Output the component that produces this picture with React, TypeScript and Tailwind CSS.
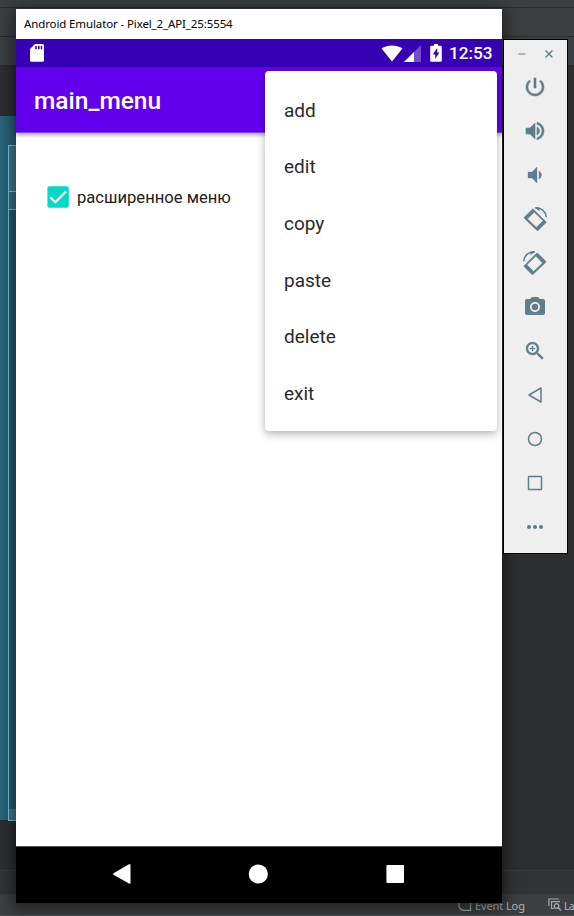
import React from "react";

const menuItems = ["add", "edit", "copy", "paste", "delete", "exit"];

const POWER =
  "M13 3h-2v10h2V3zm4.83 2.17l-1.42 1.42C17.99 7.86 19 9.81 19 12c0 3.87-3.13 7-7 7s-7-3.13-7-7c0-2.19 1.01-4.14 2.58-5.42L6.17 5.17C4.23 6.82 3 9.26 3 12c0 4.97 4.03 9 9 9s9-4.03 9-9c0-2.74-1.23-5.18-3.17-6.83z";
const VOL_UP =
  "M3 9v6h4l5 5V4L7 9H3zm13.5 3c0-1.77-1.02-3.29-2.5-4.03v8.05c1.48-.73 2.5-2.25 2.5-4.02zM14 3.23v2.06c2.89.86 5 3.54 5 6.71s-2.11 5.85-5 6.71v2.06c4.01-.91 7-4.49 7-8.77s-2.99-7.86-7-8.77z";
const VOL_DOWN =
  "M18.5 12c0-1.77-1.02-3.29-2.5-4.03v8.05c1.48-.73 2.5-2.25 2.5-4.02zM5 9v6h4l5 5V4L9 9H5z";
const CAMERA =
  "M12 8.8a3.2 3.2 0 1 0 0 6.4 3.2 3.2 0 1 0 0-6.4zM9 2L7.17 4H4c-1.1 0-2 .9-2 2v12c0 1.1.9 2 2 2h16c1.1 0 2-.9 2-2V6c0-1.1-.9-2-2-2h-3.17L15 2H9zm3 15c-2.76 0-5-2.24-5-5s2.24-5 5-5 5 2.24 5 5-2.24 5-5 5z";
const ZOOM =
  "M15.5 14h-.79l-.28-.27C15.41 12.59 16 11.11 16 9.5 16 5.91 13.09 3 9.5 3S3 5.91 3 9.5 5.91 16 9.5 16c1.61 0 3.09-.59 4.23-1.57l.27.28v.79l5 4.99L20.49 19l-4.99-5zm-6 0C7.01 14 5 11.99 5 9.5S7.01 5 9.5 5 14 7.01 14 9.5 11.99 14 9.5 14zM12 10h-2v2H9v-2H7V9h2V7h1v2h2v1z";

function ToolIcon({ children }: { children: React.ReactNode }) {
  return (
    <div className="flex h-11 items-center justify-center pr-px">
      <svg viewBox="0 0 24 24" className="size-6 shrink-0 fill-[#607d8b]">
        {children}
      </svg>
    </div>
  );
}

function RotateShape() {
  return (
    <g>
      <path
        fillRule="evenodd"
        stroke="#607d8b"
        strokeWidth=".7"
        d="M9.2 2.4L1.5 10Q.9 10.7 1.5 11.4L13.8 23.2Q14.5 23.8 15.2 23.2L22.6 15.9Q23.2 15.2 22.6 14.5L10.6 2.4Q9.9 1.8 9.2 2.4zM11.2 5L4.4 11.9 13.3 20.5 20.2 13.8z"
      />
      <path d="M12.2 .8C18 .3 22.8 4.2 23.3 10.3" fill="none" stroke="#607d8b" strokeWidth="1.5" />
      <path d="M11.8 .9L15.8 .3 17 4.2z" />
    </g>
  );
}

function Toolbar() {
  return (
    <aside className="absolute left-[503px] top-[39px] flex h-[515px] w-[65px] flex-col border border-black bg-[#efefef]">
      <div className="flex h-[25px] items-center justify-center gap-[17px] pt-[3px]">
        <svg viewBox="0 0 10 10" className="size-[10px]">
          <path d="M1.5 5h7" stroke="#94a7b0" strokeWidth="1.6" />
        </svg>
        <svg viewBox="0 0 10 10" className="size-[10px]">
          <path d="M1.5 1.5l7 7M8.5 1.5l-7 7" stroke="#607d8b" strokeWidth="1.4" />
        </svg>
      </div>
      <ToolIcon><path d={POWER} stroke="#607d8b" strokeWidth=".6" /></ToolIcon>
      <ToolIcon><path d={VOL_UP} stroke="#607d8b" strokeWidth=".6" /></ToolIcon>
      <ToolIcon><path d={VOL_DOWN} stroke="#607d8b" strokeWidth=".3" /></ToolIcon>
      <ToolIcon><RotateShape /></ToolIcon>
      <ToolIcon><g transform="translate(24 0) scale(-1 1)"><RotateShape /></g></ToolIcon>
      <ToolIcon><path d={CAMERA} /></ToolIcon>
      <ToolIcon><path d={ZOOM} stroke="#607d8b" strokeWidth=".3" /></ToolIcon>
      <ToolIcon><path d="M18 5v14L6 12z" fill="none" stroke="#607d8b" strokeWidth="1.5" strokeLinejoin="round" /></ToolIcon>
      <ToolIcon><circle cx="12" cy="12" r="6.5" fill="none" stroke="#607d8b" strokeWidth="1.5" /></ToolIcon>
      <ToolIcon><rect x="5.5" y="5.5" width="13" height="13" rx=".6" fill="none" stroke="#607d8b" strokeWidth="1.5" /></ToolIcon>
      <ToolIcon>
        <circle cx="6" cy="12" r="2" />
        <circle cx="12" cy="12" r="2" />
        <circle cx="18" cy="12" r="2" />
      </ToolIcon>
    </aside>
  );
}

function StatusBar() {
  return (
    <div className="flex h-7 shrink-0 items-center bg-[#3700b3] pl-[14px] pr-[10px] text-white">
      <svg viewBox="0 0 14 18" className="h-[18px] w-[14px]">
        <path fill="#fff" d="M5 0h7.5Q14 0 14 1.5v14.8q0 1.5-1.5 1.5h-11Q0 17.8 0 16.3V5z" />
        <path fill="#3700b3" d="M5.2 2h1.6v3.2H5.2zM8 2h1.6v3.2H8zM10.7 2h1.5v3.2h-1.5z" />
      </svg>
      <svg viewBox="0 0 22 17" className="ml-auto h-[17px] w-[22px]">
        <path fill="#fff" d="M.6 3.6C6.5-.7 15.5-.7 21.4 3.6L11 16.6z" />
      </svg>
      <svg viewBox="0 0 17 17" className="ml-[1px] h-[17px] w-[17px]">
        <path fill="#fff" fillOpacity=".3" d="M17 0v17H0z" />
        <path fill="#fff" d="M10 7V17H0z" />
      </svg>
      <svg viewBox="0 0 12 18" className="ml-[9px] h-[18px] w-3">
        <path fill="#fff" d="M4 0h4v1.8h2.7q1.1 0 1.1 1.1v13.8q0 1.1-1.1 1.1H1.3Q.2 17.8.2 16.7V2.9q0-1.1 1.1-1.1H4z" />
        <path fill="#3700b3" d="M7.2 4L2.8 10.5h2.5V15l4-6.4H7.2z" />
      </svg>
      <span className="ml-[7px] w-[43px] whitespace-nowrap text-[17.2px] font-medium leading-7">12:53</span>
    </div>
  );
}

function Emulator() {
  return (
    <section className="absolute left-4 top-[9px] flex h-[894px] w-[486px] flex-col bg-white shadow-[0_3px_14px_3px_rgba(0,0,0,0.5)]">
      <header className="h-[30px] shrink-0 pl-2 font-['Noto_Sans','Open_Sans',sans-serif] text-[11.5px] leading-[30px] text-black">
        <span className="whitespace-nowrap tracking-[-0.12px]">Android Emulator - Pixel_2_API_25:5554</span>
      </header>
      <StatusBar />
      <div className="flex h-[66px] shrink-0 items-center border-b border-[#8142ee] bg-[#6200ee] pl-[18px] pt-[4px] text-[24.5px] font-medium text-white shadow-[0_2px_4px_rgba(0,0,0,0.35)]">
        main_menu
      </div>
      <main className="flex flex-1 items-start pl-[31px] pt-[53px]">
        <svg viewBox="0 0 22 22" className="size-[22px] shrink-0">
          <rect x=".4" y=".2" width="21.4" height="21.6" rx="2" fill="#03dac5" />
          <path d="M3.3 11.2l5 5L19 5.5" fill="none" stroke="#fff" strokeWidth="2.3" />
        </svg>
        <span className="ml-[8px] whitespace-nowrap text-[16.6px] leading-[24px] text-[#202020]">расширенное меню</span>
      </main>
      <nav className="flex h-[57px] shrink-0 items-center border-t border-[#555] bg-black pb-[2px] pl-[97px]">
        <svg viewBox="0 0 18 20" className="h-5 w-[18px]">
          <path fill="#fff" d="M17.5 .3v19.4L16 19.5.5 10.8Q-.2 10 .5 9.2L16 .3z" />
        </svg>
        <svg viewBox="0 0 20 20" className="ml-[117px] size-5">
          <circle cx="10.3" cy="10" r="9.6" fill="#fff" />
        </svg>
        <svg viewBox="0 0 18 18" className="ml-[118px] size-[18px]">
          <rect x=".4" width="17.6" height="18" rx="1" fill="#fff" />
        </svg>
      </nav>
      <ul className="absolute left-[249px] top-[62px] flex h-[360px] w-[232px] flex-col rounded-[4px] bg-white pt-[11.6px] shadow-[0_3px_9px_rgba(0,0,0,0.3)]">
        {menuItems.map((item) => (
          <li key={item} className="flex h-[56.7px] items-center pl-[19px] text-[19px] text-[#2a2a2a]">
            {item}
          </li>
        ))}
      </ul>
    </section>
  );
}

function IdeBackdrop() {
  return (
    <div className="flex h-[916px] w-[574px] flex-col bg-[#2d2e30]">
      <div className="h-2 shrink-0 border-b border-[#2b2b2b] bg-[#3c3f41]" />
      <div className="h-[29px] shrink-0 border-b border-[#2b2b2b] bg-[#3c3f41]" />
      <div className="h-[29px] shrink-0 border-b border-[#2b2b2b] bg-[#3c3f41]" />
      <div className="h-[50px] shrink-0" />
      <div className="h-[704px] w-16 shrink-0 bg-[#28647a] pl-2 pt-[29px]">
        <div className="h-[676px] border border-r-0 border-[#7cc6dc] bg-[#225d70]">
          <div className="h-[46px] border-b border-[#7cc6dc] bg-[#417a8c]" />
          <div className="h-[18px] border-b border-[#7cc6dc] bg-[#357084]" />
          <div className="h-[599px]" />
          <div className="h-[11px] bg-[#417a8c]" />
        </div>
      </div>
      <div className="h-[50px] shrink-0" />
      <div className="h-6 shrink-0 border-t border-[#3a3c3e] bg-[#313335]" />
      <div className="flex h-[22px] shrink-0 items-center overflow-hidden border-b border-[#4b4e50] bg-[#3c3f41] pl-[458px] font-['Noto_Sans','Open_Sans',sans-serif] text-[11px] text-[#b4b6b8]">
        <svg viewBox="0 0 14 14" className="size-[14px] shrink-0">
          <path d="M12.5 0v12.3H6A5.3 5.3 0 0 1 .8 7V0" fill="none" stroke="#a7aaac" strokeWidth="1.3" />
        </svg>
        <span className="ml-[3px] w-[52px] whitespace-nowrap pt-1 tracking-[-0.1px]">Event Log</span>
        <svg viewBox="0 0 14 14" className="ml-[21px] size-[14px] shrink-0">
          <path d="M.8 8V1H11M3.5 11V3.6H12M3.5 10.5H6" fill="none" stroke="#a7aaac" strokeWidth="1.2" />
          <circle cx="8.5" cy="8" r="2.3" fill="none" stroke="#a7aaac" strokeWidth="1.3" />
          <path d="M10 9.5l3 3" stroke="#a7aaac" strokeWidth="1.4" />
        </svg>
        <span className="ml-[2.5px] whitespace-nowrap pt-1 text-[10.5px] tracking-[-0.7px]">La</span>
      </div>
    </div>
  );
}

export default function App() {
  return (
    <div className="relative h-[916px] w-[574px] overflow-hidden font-['Roboto',sans-serif]">
      <IdeBackdrop />
      <Emulator />
      <Toolbar />
    </div>
  );
}
